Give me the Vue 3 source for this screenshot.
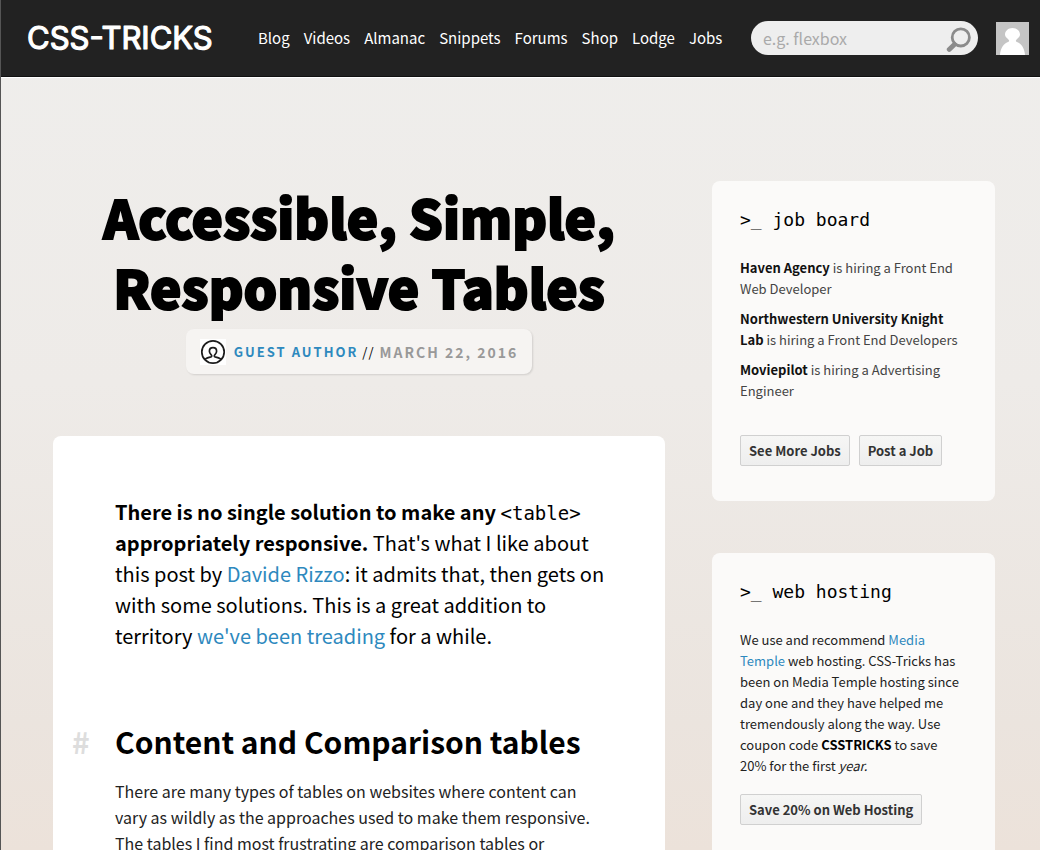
<script setup>
const nav = ['Blog', 'Videos', 'Almanac', 'Snippets', 'Forums', 'Shop', 'Lodge', 'Jobs']
const jobs = [
  { company: 'Haven Agency', role: 'Front End Web Developer' },
  { company: 'Northwestern University Knight Lab', role: 'Front End Developers' },
  { company: 'Moviepilot', role: 'Advertising Engineer' },
]
</script>

<template>
  <div class="page">
    <header class="site-header">
      <a class="logo" href="#" aria-label="CSS-Tricks">
        <svg width="200" height="40" viewBox="0 0 200 40">
          <text x="0" y="31">CSS-TRICKS</text>
        </svg>
      </a>
      <nav class="main-nav">
        <a v-for="item in nav" :key="item" href="#">{{ item }}</a>
      </nav>
      <form class="search" role="search" @submit.prevent>
        <input type="search" placeholder="e.g. flexbox" aria-label="Search" />
        <button type="submit" aria-label="Submit search">
          <svg width="26" height="26" viewBox="0 0 26 26" fill="none" stroke="#8b8b8b">
            <circle cx="14.8" cy="10.4" r="8.6" stroke-width="2.8" />
            <path d="M8.4 17.4 L3.2 22.4" stroke-width="4.8" stroke-linecap="round" />
          </svg>
        </button>
      </form>
      <a class="avatar" href="#" aria-label="Account">
        <svg width="33" height="33" viewBox="0 0 33 33">
          <rect width="33" height="33" fill="#c5c5c5" />
          <path d="M4 33 C4.6 26 7.6 21.6 12 20 C13.6 19.4 13.4 18.4 12.4 17.4 C10.2 15.8 9 14.2 9 12.6 C9 8.9 12.2 6 16.5 6 C20.8 6 24 8.9 24 12.6 C24 14.2 22.8 15.8 20.6 17.4 C19.6 18.4 19.4 19.4 21 20 C25.4 21.6 28.4 26 29 33 Z" fill="#fff" />
        </svg>
      </a>
    </header>

    <div class="layout">
      <main>
        <div class="title-area">
          <h1>Accessible, Simple, Responsive Tables</h1>
          <div class="meta">
            <svg class="author-icon" width="26" height="26" viewBox="0 0 26 26">
              <rect width="26" height="26" fill="#fff" />
              <g fill="none" stroke="#1c1c1c" stroke-width="1.7">
                <circle cx="13" cy="13" r="11.2" />
                <path d="M4.6 20.4 C6.8 18.8 9.2 18.2 11 17.9 C12 17.6 11.9 16.6 11.2 15.8 C10 14.6 9.4 13.6 9.4 12.2 C9.4 10 11 8.6 13 8.6 C15 8.6 16.6 10 16.6 12.2 C16.6 13.6 16 14.6 14.8 15.8 C14.1 16.6 14 17.6 15 17.9 C16.8 18.2 19.2 18.8 21.4 20.4" />
              </g>
            </svg>
            <a href="#">Guest Author</a>
            <span class="slashes">//</span>
            <time datetime="2016-03-22">March 22, 2016</time>
          </div>
        </div>
        <article>
          <p class="intro">
            <strong>There is no single solution to make any <code>&lt;table&gt;</code> appropriately responsive.</strong>
            That's what I like about this post by <a href="#">Davide Rizzo</a>: it admits that, then gets on with some
            solutions. This is a great addition to territory <a href="#">we've been treading</a> for a while.
          </p>
          <h2><a class="anchor" href="#">#</a>Content and Comparison tables</h2>
          <p>
            There are many types of tables on websites where content can vary as wildly as the approaches used to make
            them responsive. The tables I find most frustrating are comparison tables or
          </p>
        </article>
      </main>

      <aside>
        <section class="card">
          <h3>&gt;_ job board</h3>
          <ul>
            <li v-for="job in jobs" :key="job.company">
              <strong>{{ job.company }}</strong> is hiring a {{ job.role }}
            </li>
          </ul>
          <div class="actions">
            <button type="button">See More Jobs</button>
            <button type="button">Post a Job</button>
          </div>
        </section>
        <section class="card">
          <h3>&gt;_ web hosting</h3>
          <p>
            We use and recommend <a href="#">Media Temple</a> web hosting. CSS-Tricks has been on Media Temple hosting
            since day one and they have helped me tremendously along the way. Use coupon code
            <strong>CSSTRICKS</strong> to save 20% for the first <em>year.</em>
          </p>
          <button type="button">Save 20% on Web Hosting</button>
        </section>
      </aside>
    </div>
  </div>
</template>

<style>
body {
  margin: 0;
}
</style>

<style scoped>
* {
  box-sizing: border-box;
}
.page {
  height: 100vh;
  overflow: hidden;
  border-left: 1px solid #555;
  background: linear-gradient(#efeeec, #eeebe8 45%, #ebe4de 85%, #ece2da);
  font-family: "Noto Sans CJK SC", "Noto Sans", sans-serif;
  font-size: 16px;
  color: #222;
}
a {
  color: #2e89be;
  text-decoration: none;
}
h1,
h2,
h3,
p,
ul {
  margin: 0;
  padding: 0;
}
.site-header {
  display: flex;
  align-items: center;
  height: 77px;
  padding: 0 11px 0 26px;
  background: #222;
  border-bottom: 1px solid #111;
  box-shadow: 0 1px 0 #fff;
}
.logo svg {
  display: block;
}
.logo text {
  font-family: Inter, sans-serif;
  font-size: 31px;
  fill: #fff;
  stroke: #fff;
  stroke-width: 1.2px;
  stroke-linejoin: round;
}
.main-nav {
  display: flex;
  flex: 1;
  gap: 14px;
  margin-left: 31px;
}
.main-nav a {
  color: #fff;
  font-size: 15px;
  line-height: 24px;
  white-space: nowrap;
}
.search {
  display: flex;
  align-items: center;
  width: 227px;
  height: 34px;
  padding: 0 6px 0 12px;
  border-radius: 17px;
  background: #eee;
}
.search input {
  flex: 1;
  min-width: 0;
  border: 0;
  padding: 0;
  background: none;
  font: 16px/24px "Noto Sans CJK SC", sans-serif;
  outline: none;
}
.search input::placeholder {
  color: #aaa;
}
.search button {
  display: flex;
  border: 0;
  padding: 3px 0 0;
  background: none;
}
.avatar {
  margin-left: 18px;
}
.avatar svg {
  display: block;
}
.layout {
  display: grid;
  grid-template-columns: 612fr 283fr;
  gap: 47px;
  padding: 104px 45px 0 52px;
}
.title-area {
  display: flex;
  flex-direction: column;
  align-items: center;
  margin-bottom: 62px;
}
h1 {
  max-width: 560px;
  color: #000;
  font-size: 53px;
  font-weight: 900;
  line-height: 70px;
  text-align: center;
  -webkit-text-stroke: 2px #000;
}
.meta {
  display: flex;
  align-items: center;
  height: 45px;
  margin-top: 8px;
  padding: 0 14px;
  border-radius: 8px;
  background: #f6f4f2;
  box-shadow: 1px 1px 2px rgba(0, 0, 0, 0.12);
  font-size: 13px;
  font-weight: 700;
  letter-spacing: 2px;
  text-transform: uppercase;
  white-space: nowrap;
}
.author-icon {
  margin-right: 8px;
}
.slashes {
  margin: 0 5px 0 4px;
  color: #000;
  font-weight: 400;
  letter-spacing: 1px;
}
.meta time {
  color: #999;
  font-size: 14px;
}
article {
  padding: 60px 56px 60px 62px;
  border-radius: 8px;
  background: #fff;
}
article p {
  line-height: 26px;
}
article .intro {
  color: #000;
  font-size: 20px;
  line-height: 31px;
}
code {
  font-family: "DejaVu Sans Mono", monospace;
  font-size: 19px;
  font-weight: 400;
  line-height: 20px;
}
h2 {
  position: relative;
  margin: 71px 0 18px;
  color: #000;
  font-size: 30px;
  font-weight: 700;
  line-height: 38px;
}
.anchor {
  position: absolute;
  left: -43px;
  color: #ddd;
}
aside {
  display: flex;
  flex-direction: column;
  gap: 52px;
}
.card {
  padding: 25px 29px 35px 28px;
  border-radius: 8px;
  background: #fbfaf9;
  font-size: 13px;
  line-height: 21px;
}
h3 {
  margin-bottom: 23px;
  color: #000;
  font-family: "DejaVu Sans Mono", monospace;
  font-size: 18px;
  font-weight: 400;
  line-height: 28px;
}
.card ul {
  list-style: none;
  color: #444;
}
.card li {
  margin-bottom: 9px;
}
.card li strong {
  color: #111;
}
.card p strong {
  color: #000;
}
.actions {
  display: flex;
  gap: 9px;
  margin-top: 34px;
}
.card button {
  height: 31px;
  padding: 0 8px;
  border: 1px solid #d0d0d0;
  border-radius: 2px;
  background: linear-gradient(#f6f6f5, #eee);
  color: #333;
  font: 700 13px/21px "Noto Sans CJK SC", sans-serif;
  white-space: nowrap;
}
.card p {
  margin-bottom: 18px;
}
</style>
